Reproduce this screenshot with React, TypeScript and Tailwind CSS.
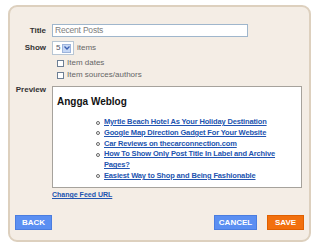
import React from "react";

const posts = [
  "Myrtle Beach Hotel As Your Holiday Destination",
  "Google Map Direction Gadget For Your Website",
  "Car Reviews on thecarconnection.com",
  "How To Show Only Post Title In Label and Archive Pages?",
  "Easiest Way to Shop and Being Fashionable",
];

export default function App() {
  return (
    <div className="w-[320px] h-[245px] bg-white pt-[5px] pl-[8px] font-['Liberation_Sans',Arial,sans-serif]">
      <div className="w-[303px] h-[237px] rounded-[9px] border-2 border-[#ddd0be] bg-[#f4ede5] flex flex-col">
        <div className="grid grid-cols-[36px_1fr] gap-x-[6px] mt-[17px]">
          <div className="text-right text-[8px] font-bold text-[#333] leading-[13px]">Title</div>
          <div className="w-[196px] h-[13px] border border-[#9fb6cc] bg-white text-[8.5px] leading-[11px] text-[#808080] pl-[2px] tracking-[-0.2px]">Recent Posts</div>

          <div className="text-right text-[8px] font-bold text-[#333] leading-[13px] mt-[4px]">Show</div>
          <div className="flex items-center mt-[4px] h-[14px]">
            <div className="w-[22px] h-[14px] border border-[#b8c6d4] bg-white flex items-center pl-[3px] gap-[2px]">
              <span className="text-[8px] text-[#556] leading-none">5</span>
              <span className="w-[9px] h-[9px] bg-[#c5d7f5] border border-[#9db4dc] flex items-center justify-center">
                <svg width="6" height="4" viewBox="0 0 6 4"><path d="M0.5 0.5 L3 3 L5.5 0.5" stroke="#3a5fb0" strokeWidth="1.3" fill="none" /></svg>
              </span>
            </div>
            <span className="ml-[3px] text-[8px] text-[#666]">items</span>
          </div>

          <div />
          <div className="flex items-center mt-[4px] pl-[5px] h-[8px]">
            <span className="w-[7px] h-[7px] border border-[#6d7f95] bg-white" />
            <span className="ml-[3px] text-[8px] text-[#666] leading-none">Item dates</span>
          </div>
          <div />
          <div className="flex items-center mt-[4px] pl-[5px] h-[8px]">
            <span className="w-[7px] h-[7px] border border-[#6d7f95] bg-white" />
            <span className="ml-[3px] text-[8px] text-[#666] leading-none">Item sources/authors</span>
          </div>

          <div className="text-right text-[8px] font-bold text-[#333] mt-[6px] leading-[10px]">Preview</div>
          <div className="mt-[7px] w-[250px] h-[102px] border border-[#a6a29c] bg-white pl-[4px] pt-[8px]">
            <div className="text-[10px] font-bold text-[#111] leading-[14px]">Angga Weblog</div>
            <ul className="mt-[8px] ml-[39px]">
              {posts.map((p) => (
                <li key={p} className="flex text-[7.5px] font-bold leading-[10.8px] tracking-[-0.15px]">
                  <span className="w-[8px] shrink-0 flex pt-[3.5px]">
                    <span className="w-[4px] h-[4px] rounded-full border border-[#666]" />
                  </span>
                  <span className="text-[#2254b0] underline w-[182px]">{p}</span>
                </li>
              ))}
            </ul>
          </div>
          <div />
          <div className="mt-[2px] text-[7px] font-bold text-[#2254b0] underline leading-[10px]">Change Feed URL</div>
        </div>
        <div className="flex mt-[15px] px-[5px]">
          <button className="w-[37px] h-[15px] bg-[#5b8ff2] border border-[#4a7de0] text-white text-[8px] font-bold">BACK</button>
          <div className="flex-1" />
          <button className="w-[43px] h-[15px] bg-[#5b8ff2] border border-[#4a7de0] text-white text-[8px] font-bold">CANCEL</button>
          <button className="ml-[10px] w-[37px] h-[15px] bg-[#f2700e] border border-[#e06000] text-white text-[8px] font-bold">SAVE</button>
        </div>
      </div>
    </div>
  );
}
